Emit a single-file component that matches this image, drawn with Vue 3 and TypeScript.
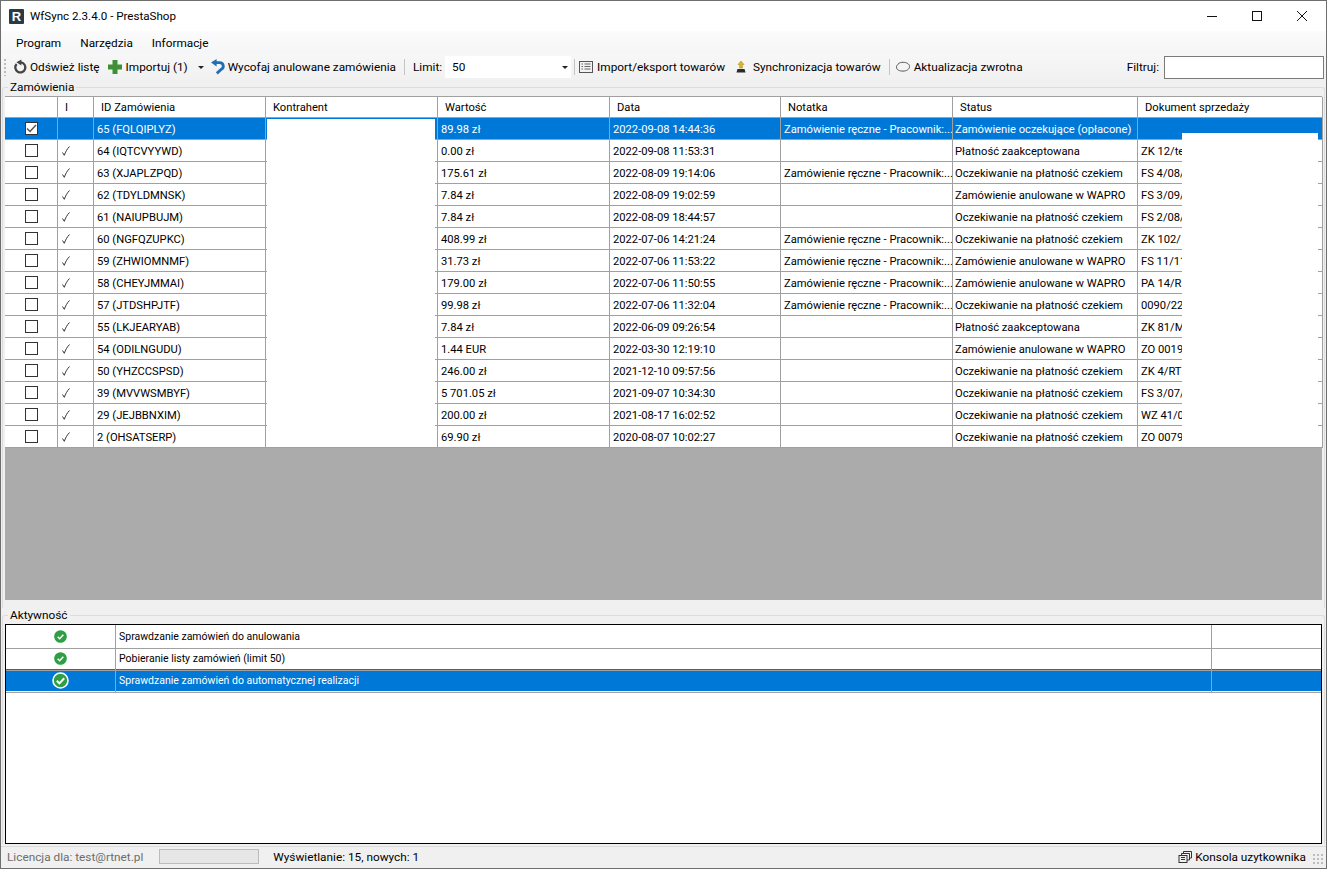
<template>
  <div class="window">
    <header class="titlebar">
      <span class="app-logo">R</span>
      <span class="app-title">WfSync 2.3.4.0 - PrestaShop</span>
      <div class="win-buttons">
        <svg width="12" height="12" viewBox="0 0 12 12"><path d="M1 6.5h10" stroke="#111" fill="none" /></svg>
        <svg width="12" height="12" viewBox="0 0 12 12"><rect x="1.5" y="1.5" width="9" height="9" stroke="#111" fill="none" /></svg>
        <svg width="12" height="12" viewBox="0 0 12 12"><path d="M1 1l10 10M11 1L1 11" stroke="#111" fill="none" /></svg>
      </div>
    </header>

    <nav class="menubar">
      <span v-for="item in menu" :key="item">{{ item }}</span>
    </nav>

    <div class="toolbar">
      <span class="grip"></span>
      <button class="tool tool-refresh">
        <svg width="16" height="16" viewBox="0 0 16 16">
          <path d="M4.6 5a5 5 0 1 0 4.4-1.6" fill="none" stroke="#444" stroke-width="2.3" />
          <path d="M9.4 0.4v6.2L4.4 3.2z" fill="#444" />
        </svg>
        Odśwież listę
      </button>
      <button class="tool tool-import">
        <svg width="16" height="16" viewBox="0 0 16 16"><path d="M5.5 1h5v4.5H15v5h-4.5V15h-5v-4.5H1v-5h4.5z" fill="#3f8f37" /></svg>
        Importuj (1)
      </button>
      <span class="drop-arrow arrow-import"></span>
      <button class="tool tool-undo">
        <svg width="16" height="16" viewBox="0 0 16 16">
          <path d="M5.5 3.6h4.3a3.5 3.5 0 0 1 1.6 6.6L6.8 14.4" fill="none" stroke="#1f6fb5" stroke-width="2.8" />
          <path d="M6.6 0v7.4L1 3.6z" fill="#1f6fb5" />
        </svg>
        Wycofaj anulowane zamówienia
      </button>
      <span class="sep sep-limit"></span>
      <span class="limit-label">Limit:</span>
      <div class="combo">50<span class="drop-arrow"></span></div>
      <span class="sep sep-tight"></span>
      <button class="tool tool-list">
        <svg width="14" height="14" viewBox="0 0 14 14">
          <rect x="0.5" y="1.5" width="13" height="11" fill="#f2f2f2" stroke="#555" />
          <path d="M2.5 4h1.5M2.5 6.5h1.5M2.5 9h1.5M5.5 4h6M5.5 6.5h6M5.5 9h6" stroke="#666" />
        </svg>
        Import/eksport towarów
      </button>
      <button class="tool tool-sync">
        <svg width="16" height="16" viewBox="0 0 16 16">
          <path d="M8 2l3 3.5H9.4V9H6.6V5.5H5z" fill="#e0b81c" stroke="#a68612" stroke-width=".5" />
          <path d="M3.5 13.5l1-3.5h7l1 3.5z" fill="#2b2b2b" />
        </svg>
        Synchronizacja towarów
      </button>
      <span class="sep sep-sync"></span>
      <button class="tool tool-back">
        <svg width="16" height="16" viewBox="0 0 16 16">
          <path d="M3 5.2c1.4-1.6 3-1.9 5.2-1.9 2.8 0 6.3 1.3 6.3 4.2 0 3-3.2 4.6-6.5 4.6-3.2 0-6.5-1-6.5-3.9 0-1.2.6-2.1 1.5-3z" fill="#f4f4f4" stroke="#555" />
        </svg>
        Aktualizacja zwrotna
      </button>
      <span class="filter-label">Filtruj:</span>
      <input class="filter" type="text" />
    </div>

    <section class="group group-orders">
      <div class="group-label">Zamówienia</div>
      <div class="orders">
        <div class="row head">
          <div v-for="col in columns" :key="col" class="cell">{{ col }}</div>
        </div>
        <div v-for="(o, i) in orders" :key="o.id" class="row" :class="{ selected: i === 0 }">
          <div class="cell check-cell">
            <span class="box">
              <svg v-if="i === 0" width="13" height="13" viewBox="0 0 13 13"><path d="M2 6.5l3 3 6-6.5" fill="none" stroke="#555" stroke-width="1.5" /></svg>
            </span>
          </div>
          <div class="cell tick-cell">
            <svg v-if="i !== 0" width="10" height="12" viewBox="0 0 10 12"><path d="M1.5 7.5l1.8 2.8C4.5 7 6 4 8.5 1.5" fill="none" stroke="#333" /></svg>
          </div>
          <div class="cell">{{ o.id }}</div>
          <div class="cell"></div>
          <div class="cell">{{ o.value }}</div>
          <div class="cell">{{ o.date }}</div>
          <div class="cell">{{ o.manual ? manualNote : '' }}</div>
          <div class="cell cell-status">{{ o.status }}</div>
          <div class="cell">{{ o.doc }}</div>
        </div>
        <!-- blanked out parts of the screenshot -->
        <div class="blank blank-client"></div>
        <div class="blank blank-doc"></div>
      </div>
    </section>

    <section class="group group-activity">
      <div class="group-label">Aktywność</div>
      <div class="activity">
        <div v-for="(a, i) in activity" :key="a" class="a-row" :class="{ selected: i === 2 }">
          <div class="a-icon">
            <svg :width="i === 2 ? 17 : 13" :height="i === 2 ? 17 : 13" viewBox="0 0 17 17">
              <circle cx="8.5" cy="8.5" r="7.5" fill="#2f9e44" :stroke="i === 2 ? '#fff' : '#2f9e44'" stroke-width="1.6" />
              <path d="M4.8 8.8l2.6 2.6 4.8-5.2" fill="none" stroke="#fff" stroke-width="2" />
            </svg>
          </div>
          <div class="a-text">{{ a }}</div>
          <div class="a-end"></div>
        </div>
      </div>
    </section>

    <footer class="statusbar">
      <span class="license">Licencja dla: test@rtnet.pl</span>
      <span class="progress"></span>
      <span>Wyświetlanie: 15, nowych: 1</span>
      <span class="console">
        <svg width="14" height="14" viewBox="0 0 14 14" fill="none" stroke="#333">
          <rect x="1" y="5.5" width="8" height="7" />
          <path d="M3 7.5h4M3 9.5h4M3.5 5.5v-2h8v6.5H9M5.5 3.5v-2h8v6.5h-2" />
        </svg>
        Konsola uzytkownika
      </span>
      <span class="resize-grip"></span>
    </footer>
  </div>
</template>

<script setup lang="ts">
interface Order {
  id: string
  value: string
  date: string
  manual: boolean
  status: string
  doc: string
}

const menu = ['Program', 'Narzędzia', 'Informacje']
const columns = ['', 'I', 'ID Zamówienia', 'Kontrahent', 'Wartość', 'Data', 'Notatka', 'Status', 'Dokument sprzedaży']
const manualNote = 'Zamówienie ręczne - Pracownik:...'

const WAIT = 'Oczekiwanie na płatność czekiem'
const CANCELLED = 'Zamówienie anulowane w WAPRO'
const ACCEPTED = 'Płatność zaakceptowana'

const orders: Order[] = [
  { id: '65 (FQLQIPLYZ)', value: '89.98 zł', date: '2022-09-08 14:44:36', manual: true, status: 'Zamówienie oczekujące (opłacone)', doc: '' },
  { id: '64 (IQTCVYYWD)', value: '0.00 zł', date: '2022-09-08 11:53:31', manual: false, status: ACCEPTED, doc: 'ZK 12/te' },
  { id: '63 (XJAPLZPQD)', value: '175.61 zł', date: '2022-08-09 19:14:06', manual: true, status: WAIT, doc: 'FS 4/08/' },
  { id: '62 (TDYLDMNSK)', value: '7.84 zł', date: '2022-08-09 19:02:59', manual: false, status: CANCELLED, doc: 'FS 3/09/' },
  { id: '61 (NAIUPBUJM)', value: '7.84 zł', date: '2022-08-09 18:44:57', manual: false, status: WAIT, doc: 'FS 2/08/' },
  { id: '60 (NGFQZUPKC)', value: '408.99 zł', date: '2022-07-06 14:21:24', manual: true, status: WAIT, doc: 'ZK 102/' },
  { id: '59 (ZHWIOMNMF)', value: '31.73 zł', date: '2022-07-06 11:53:22', manual: true, status: CANCELLED, doc: 'FS 11/11' },
  { id: '58 (CHEYJMMAI)', value: '179.00 zł', date: '2022-07-06 11:50:55', manual: true, status: CANCELLED, doc: 'PA 14/R' },
  { id: '57 (JTDSHPJTF)', value: '99.98 zł', date: '2022-07-06 11:32:04', manual: true, status: WAIT, doc: '0090/22' },
  { id: '55 (LKJEARYAB)', value: '7.84 zł', date: '2022-06-09 09:26:54', manual: false, status: ACCEPTED, doc: 'ZK 81/M' },
  { id: '54 (ODILNGUDU)', value: '1.44 EUR', date: '2022-03-30 12:19:10', manual: false, status: CANCELLED, doc: 'ZO 0019' },
  { id: '50 (YHZCCSPSD)', value: '246.00 zł', date: '2021-12-10 09:57:56', manual: false, status: WAIT, doc: 'ZK 4/RT' },
  { id: '39 (MVVWSMBYF)', value: '5 701.05 zł', date: '2021-09-07 10:34:30', manual: false, status: WAIT, doc: 'FS 3/07/' },
  { id: '29 (JEJBBNXIM)', value: '200.00 zł', date: '2021-08-17 16:02:52', manual: false, status: WAIT, doc: 'WZ 41/0' },
  { id: '2 (OHSATSERP)', value: '69.90 zł', date: '2020-08-07 10:02:27', manual: false, status: WAIT, doc: 'ZO 0079' },
]

const activity = [
  'Sprawdzanie zamówień do anulowania',
  'Pobieranie listy zamówień (limit 50)',
  'Sprawdzanie zamówień do automatycznej realizacji',
]
</script>

<style>
html,
body {
  margin: 0;
  background: #f0f0f0;
}
</style>

<style scoped>
.window {
  box-sizing: border-box;
  width: 1327px;
  height: 869px;
  display: flex;
  flex-direction: column;
  overflow: hidden;
  border: 1px solid #6e6e6e;
  background: #f0f0f0;
  color: #000;
  font-family: Roboto, "Liberation Sans", sans-serif;
  font-size: 11.2px;
}

.titlebar {
  height: 30px;
  display: flex;
  align-items: center;
  background: #fff;
  flex: none;
}

.app-logo {
  width: 15px;
  height: 15px;
  margin-left: 8px;
  background: #2b3a45;
  color: #fff;
  font: bold 13px/15px "Liberation Sans", sans-serif;
  text-align: center;
  border-radius: 1px;
}

.app-title {
  margin-left: 6px;
  font-size: 11.6px;
}

.win-buttons {
  margin-left: auto;
  display: flex;
  gap: 33px;
  padding-right: 18px;
}

.menubar {
  height: 23px;
  flex: none;
  display: flex;
  align-items: center;
  gap: 19px;
  padding-left: 15px;
  background: linear-gradient(#fbfbfc, #f5f6f7);
  font-size: 11.8px;
}

.toolbar {
  box-sizing: border-box;
  height: 26px;
  flex: none;
  display: flex;
  align-items: center;
  background: linear-gradient(#f7f7f7, #f1f1f1);
  font-size: 11.8px;
}

.grip {
  width: 2px;
  height: 17px;
  margin-left: 3px;
  background: repeating-linear-gradient(#bbb 0 2px, transparent 2px 4px);
}

.tool {
  display: flex;
  align-items: center;
  gap: 2px;
  padding: 0;
  border: 0;
  background: none;
  color: inherit;
  font: inherit;
  white-space: nowrap;
}

.tool-refresh {
  margin-left: 6px;
}

.tool-import {
  margin-left: 7px;
  gap: 3px;
}

.tool-undo {
  margin-left: 3px;
}

.tool-list {
  margin-left: 1px;
  gap: 4px;
}

.tool-sync {
  margin-left: 8px;
  gap: 4px;
}

.tool-back {
  margin-left: 1px;
  gap: 3px;
}

.drop-arrow {
  width: 0;
  height: 0;
  margin: 0 3px 0 7px;
  border: 3px solid transparent;
  border-top: 3px solid #222;
  border-bottom: 0;
}

.arrow-import {
  margin-left: 10px;
}

.sep {
  width: 1px;
  height: 16px;
  background: #c4c4c4;
}

.sep-limit {
  margin: 0 8px;
}

.sep-tight {
  margin: 0 3px;
}

.sep-sync {
  margin: 0 4px 0 8px;
}

.limit-label {
  margin-right: 3px;
}

.combo {
  width: 126px;
  height: 22px;
  padding-left: 7px;
  box-sizing: border-box;
  display: flex;
  align-items: center;
  justify-content: space-between;
  background: #fff;
}

.filter-label {
  margin-left: auto;
  margin-right: 5px;
}

.filter {
  box-sizing: border-box;
  width: 160px;
  height: 23px;
  margin-right: 2px;
  border: 1px solid #7a7a7a;
  background: #fff;
}

.group {
  position: relative;
  flex: none;
  box-sizing: border-box;
  padding: 16px 4px 0 3px;
}

.group-orders {
  height: 528px;
}

.group-activity {
  height: 236px;
}

.group::before {
  content: '';
  position: absolute;
  top: 7px;
  left: 1px;
  right: 1px;
  bottom: 0;
  border: 1px solid #dcdcdc;
  border-bottom: 0;
  border-radius: 3px 3px 0 0;
}

.group-label {
  position: absolute;
  top: 0;
  left: 7px;
  padding: 0 2px;
  background: #f0f0f0;
  font-size: 11.8px;
  line-height: 14px;
}

.orders {
  position: relative;
  box-sizing: border-box;
  height: 504px;
  margin-left: 1px;
  border-top: 1px solid #a0a0a0;
  background: #ababab;
}

.row {
  display: grid;
  grid-template-columns: 53px 36px 172px 172px 172px 171px 172px 185px 185px;
  height: 22px;
  background: #fff;
}

.cell {
  box-sizing: border-box;
  padding-left: 3px;
  border-right: 1px solid #a0a0a0;
  border-bottom: 1px solid #a0a0a0;
  line-height: 23px;
  white-space: nowrap;
  overflow: hidden;
}

.cell-status {
  padding-left: 2px;
}

.head {
  height: 21px;
}

.head .cell {
  padding-left: 7px;
  line-height: 22px;
}

.selected {
  background: #0078d7;
  color: #fff;
}

.check-cell {
  display: flex;
  align-items: center;
  justify-content: center;
  padding: 0;
}

.box {
  box-sizing: border-box;
  width: 13px;
  height: 13px;
  display: flex;
  border: 1px solid #333;
  background: #fff;
}

.box svg {
  margin: -1px;
}

.tick-cell {
  padding: 2px 0 0 3px;
}

.blank {
  position: absolute;
  background: #fff;
}

.blank-client {
  left: 262px;
  top: 22px;
  width: 168px;
  height: 328px;
}

.blank-doc {
  left: 1177px;
  top: 36px;
  width: 136px;
  height: 310px;
}

.activity {
  position: relative;
  box-sizing: border-box;
  height: 220px;
  margin-left: 1px;
  border: 1px solid #000;
  background: #fff;
}

.a-row {
  display: grid;
  grid-template-columns: 110px 1096px 1fr;
  height: 22px;
  background: #fff;
  font-size: 10.5px;
}

.a-row > div {
  box-sizing: border-box;
  border-bottom: 1px solid #a0a0a0;
  border-right: 1px solid #a0a0a0;
  line-height: 23px;
}

.a-row > .a-end {
  border-right: 0;
}

.a-row.selected {
  background: #0078d7;
  color: #fff;
}

.a-icon {
  display: flex;
  align-items: center;
  justify-content: center;
}

.a-text {
  padding-left: 3px;
}

.statusbar {
  box-sizing: border-box;
  flex: 1;
  display: flex;
  align-items: center;
  margin-top: 2px;
  padding: 0 0 2px 6px;
  border-top: 1px solid #dcdcdc;
  font-size: 11.8px;
}

.license {
  color: #6d6d6d;
}

.progress {
  width: 98px;
  height: 13px;
  margin: 0 14px 0 16px;
  border: 1px solid #bcbcbc;
  background: #e6e6e6;
}

.console {
  margin-left: auto;
  display: flex;
  align-items: center;
  gap: 3px;
}

.resize-grip {
  width: 12px;
  height: 12px;
  margin: 4px 2px 0 6px;
  background: radial-gradient(circle, #bdbdbd 0 1px, transparent 1px) 0 0 / 4px 4px;
}
</style>
